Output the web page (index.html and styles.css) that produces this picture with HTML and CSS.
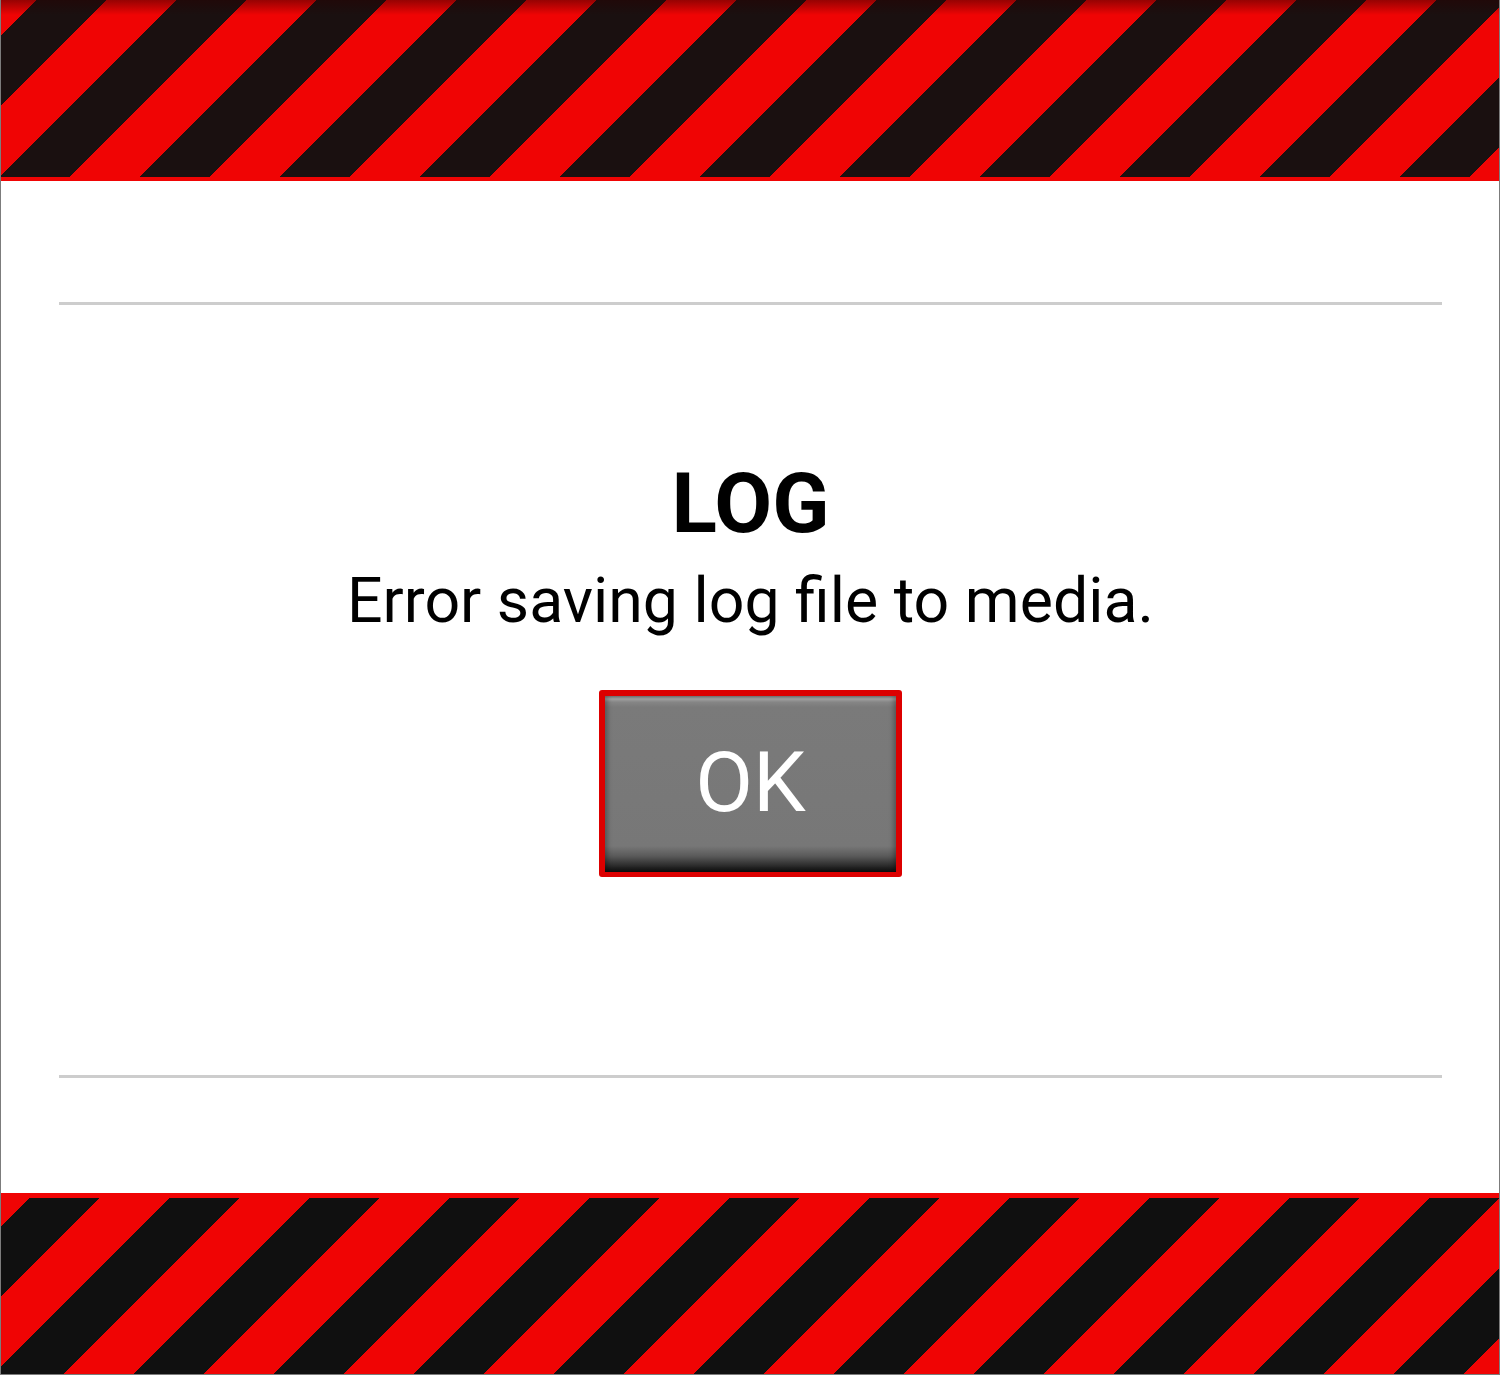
FILE: index.html
```html
<!DOCTYPE html>
<html lang="en">
<head>
<meta charset="utf-8">
<title>LOG</title>
<link rel="stylesheet" href="styles.css">
</head>
<body>
<div class="frame">
  <div class="band band-top"></div>
  <div class="content">
    <div class="rule"></div>
    <div class="middle">
      <div class="title">LOG</div>
      <div class="message">Error saving log file to media.</div>
      <button class="ok-btn"><span class="ok-face">OK</span></button>
    </div>
    <div class="rule"></div>
  </div>
  <div class="band band-bottom"></div>
</div>
</body>
</html>
```

FILE: styles.css
```css
html, body {
  margin: 0;
  padding: 0;
  background: #ffffff;
}

.frame {
  width: 1500px;
  height: 1375px;
  box-sizing: border-box;
  border-left: 1px solid #7c7c7c;
  border-right: 1px solid #7c7c7c;
  border-bottom: 1px solid #7c7c7c;
  display: flex;
  flex-direction: column;
  background: #ffffff;
  font-family: Roboto, "Liberation Sans", sans-serif;
}

.band {
  flex: 0 0 auto;
  box-sizing: border-box;
}

.band-top {
  height: 181px;
  border-bottom: 4px solid #f00404;
  background:
    linear-gradient(to bottom, rgba(40, 0, 0, 0.45) 0px, rgba(40, 0, 0, 0) 15px) no-repeat,
    linear-gradient(135deg, #1a1010 0 25%, #f00404 25% 50%, #1a1010 50% 75%, #f00404 75% 100%);
  background-size: 100% 20px, 140px 140px;
  background-position: 0 0, 35px 0;
}

.band-bottom {
  height: 181px;
  border-top: 5px solid #f00404;
  background: linear-gradient(135deg, #101010 0 25%, #f00404 25% 50%, #101010 50% 75%, #f00404 75% 100%);
  background-size: 140px 140px;
  background-position: 28px 0;
}

.content {
  flex: 1 1 auto;
  display: flex;
  flex-direction: column;
  padding: 121px 57px 0 58px;
}

.rule {
  height: 3px;
  background: #cdcdcd;
  flex: 0 0 auto;
}

.middle {
  height: 770px;
  box-sizing: border-box;
  padding-top: 149px;
  display: flex;
  flex-direction: column;
  align-items: center;
}

.title {
  font-size: 84px;
  font-weight: 700;
  line-height: 100px;
  color: #000000;
  margin-bottom: 10px;
}

.message {
  font-size: 62.6px;
  line-height: 74px;
  color: #000000;
}

.ok-btn {
  margin-top: 52px;
  width: 303px;
  height: 187px;
  padding: 0;
  border: 6px solid #dc0000;
  border-bottom-width: 5px;
  border-radius: 3px;
  background: #dc0000;
  box-sizing: border-box;
  display: flex;
  cursor: pointer;
}

.ok-face {
  flex: 1 1 auto;
  display: flex;
  align-items: center;
  justify-content: center;
  font-family: Roboto, "Liberation Sans", sans-serif;
  font-size: 84px;
  font-weight: 400;
  color: #ffffff;
  padding-bottom: 4px;
  background: linear-gradient(to bottom,
    #8e8e8e 0px, #a4a4a4 3px, #868686 6px, #7a7a7a 11px,
    #777777 150px, #5a5a5a 160px, #2a2a2a 170px, #0e0e0e 176px);
  box-shadow: inset 3px 0 4px rgba(0, 0, 0, 0.25), inset -3px 0 4px rgba(0, 0, 0, 0.25);
}
```
